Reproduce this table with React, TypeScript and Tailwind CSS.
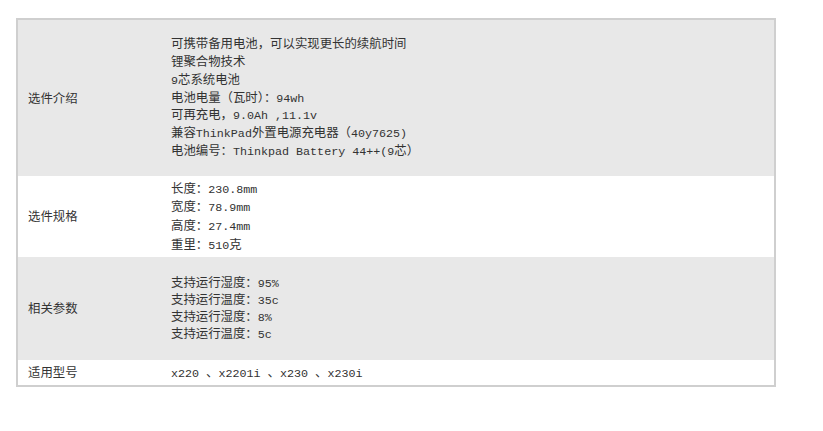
import React from "react";

const CJK = /([\u3000-\u303f\u3400-\u9fff\uff00-\uffef]+)/;

function Mixed({ text }: { text: string }) {
  const parts = text.split(CJK).filter((p) => p.length > 0);
  return (
    <>
      {parts.map((p, i) =>
        CJK.test(p) ? (
          <span key={i}>{p}</span>
        ) : (
          <span key={i} className="text-[11.7px] whitespace-pre">
            {p}
          </span>
        )
      )}
    </>
  );
}

const rows: { label: string; lines: string[]; bg: string; h: string; lh: string }[] = [
  {
    label: "选件介绍",
    lines: [
      "可携带备用电池，可以实现更长的续航时间",
      "锂聚合物技术",
      "9芯系统电池",
      "电池电量（瓦时）：94wh",
      "可再充电，9.0Ah ,11.1v",
      "兼容ThinkPad外置电源充电器（40y7625)",
      "电池编号：Thinkpad Battery 44++(9芯）",
    ],
    bg: "gray",
    h: "h-[156px]",
    lh: "leading-[17.8px]",
  },
  {
    label: "选件规格",
    lines: ["长度：230.8mm", "宽度：78.9mm", "高度：27.4mm", "重里：510克"],
    bg: "white",
    h: "h-[81px]",
    lh: "leading-[18.7px]",
  },
  {
    label: "相关参数",
    lines: ["支持运行湿度：95%", "支持运行温度：35c", "支持运行湿度：8%", "支持运行温度：5c"],
    bg: "gray",
    h: "h-[103px]",
    lh: "leading-[17px]",
  },
  {
    label: "适用型号",
    lines: ["x220 、x2201i 、x230 、x230i"],
    bg: "white",
    h: "h-[25px]",
    lh: "leading-[18px]",
  },
];

export default function App() {
  return (
    <div
      className="w-[823px] h-[431px] bg-white pt-[18px] pl-[16px] text-[#333333] text-[12.4px] leading-[18px]"
      style={{ fontFamily: '"Liberation Mono", "Noto Sans CJK SC", monospace' }}
    >
      <div className="w-[760px] border-2 border-[#cfcfcf] flex flex-col">
        {rows.map((r) => (
          <div
            key={r.label}
            className={`grid grid-cols-[153px_1fr] items-center pt-[3px] ${r.h} ${
              r.bg === "gray" ? "bg-[#e8e8e8]" : "bg-white"
            }`}
          >
            <div className="pl-[10px]">
              <Mixed text={r.label} />
            </div>
            <div className={`flex flex-col ${r.lh}`}>
              {r.lines.map((l, i) => (
                <div key={i} className="whitespace-nowrap">
                  <Mixed text={l} />
                </div>
              ))}
            </div>
          </div>
        ))}
      </div>
    </div>
  );
}
